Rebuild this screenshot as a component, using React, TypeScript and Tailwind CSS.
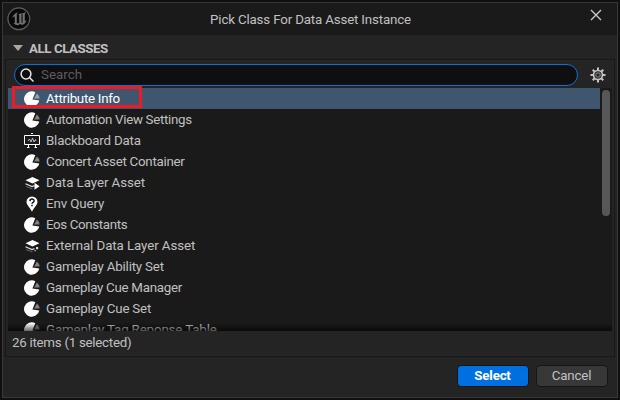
import React from "react";

type Kind = "pie" | "board" | "layers" | "external" | "query";

const items: { name: string; kind: Kind; tracking: string }[] = [
  { name: "Attribute Info", kind: "pie", tracking: "tracking-[-0.28px]" },
  { name: "Automation View Settings", kind: "pie", tracking: "tracking-[-0.32px]" },
  { name: "Blackboard Data", kind: "board", tracking: "tracking-[-0.2px]" },
  { name: "Concert Asset Container", kind: "pie", tracking: "tracking-[-0.27px]" },
  { name: "Data Layer Asset", kind: "layers", tracking: "tracking-[-0.07px]" },
  { name: "Env Query", kind: "query", tracking: "tracking-[-0.1px]" },
  { name: "Eos Constants", kind: "pie", tracking: "tracking-[-0.36px]" },
  { name: "External Data Layer Asset", kind: "external", tracking: "tracking-[-0.09px]" },
  { name: "Gameplay Ability Set", kind: "pie", tracking: "tracking-[-0.2px]" },
  { name: "Gameplay Cue Manager", kind: "pie", tracking: "tracking-[-0.28px]" },
  { name: "Gameplay Cue Set", kind: "pie", tracking: "tracking-[-0.2px]" },
  { name: "Gameplay Tag Reponse Table", kind: "pie", tracking: "tracking-[-0.15px]" },
];

function ClassIcon({ kind }: { kind: Kind }) {
  return (
    <svg className="size-4 shrink-0" viewBox="0 0 16 16" fill="none">
      {kind === "pie" && (
        <>
          <path d="M11.3 1.2A7.7 7.7 0 1 0 15.3 9.5L8.4 8.5Z" fill="#fff" />
          <path d="M12.9 2.6A7.5 7.5 0 0 1 15.6 7.4L10.1 7.6Z" fill="#fff" fillOpacity=".45" />
        </>
      )}
      {kind === "board" && (
        <>
          <path d="M.5 2.5h15v9H.5zM7 .5h2M4.5 12v2.5M11.5 12v2.5M3 14.5h2.5M10.5 14.5H13" stroke="#fff" />
          <path d="M4 8l1.5-2L7 9l1.5-4L10 9l1.5-2.5L12 8" stroke="#ccc" strokeWidth=".9" />
        </>
      )}
      {(kind === "layers" || kind === "external") && (
        <>
          <path d="M8.5 2l7 3.3-7 3.3-7-3.3Z" fill="#fff" />
          <path d="M1.5 8.7l6.5 2.8 2.5-.9" stroke="#ddd" strokeWidth="1.2" />
          <path d="M2 11.5l6.5 2.5" stroke="#666" />
          {kind === "layers" ? (
            <path d="M10.5 7.8l5 3.5-5 3.5Z" fill="#fff" />
          ) : (
            <path d="M12 9h2.2v2.2H12zM10.5 12h1.2v1.2h-1.2z" fill="#ddd" />
          )}
        </>
      )}
      {kind === "query" && (
        <>
          <path d="M8 .5A5.5 5.5 0 0 0 2.5 6C2.5 9 5.5 10.5 8 15.8 10.5 10.5 13.5 9 13.5 6A5.5 5.5 0 0 0 8 .5Z" fill="#fff" />
          <path d="M5.9 5.1C6 2.3 10.2 2.6 10.1 4.9 10 6.4 8 6.2 8 7.8M8 8.8v1.4" stroke="#171717" strokeWidth="1.5" />
        </>
      )}
    </svg>
  );
}

function EngineLogo() {
  return (
    <svg className="size-6" viewBox="0 0 24 24">
      <circle cx="11.8" cy="11.8" r="10.9" fill="#090909" stroke="#5c5c5c" strokeWidth="1.2" />
      <path d="M5 11.2C6 8 8.5 6 11 5.3 9.9 6.2 9.8 7 9.8 8v7.2c0 .9 1 1.4 2.4.8V8.7c0-.9-.4-1.2-1-1.4 1-.7 2.4-.8 3.9-1.1-.5.6-.6 1-.6 1.7v7c0 .8.5 1 1.1.6V8c0-.7-.3-1-.8-1.2 1.6-.5 2.8-.8 4.1-2.2-.8 1.8-1.1 2.8-1.1 4.1v5.4c.7-.1 1.4-.7 2-1.4-.9 3-2.9 4.9-5.1 5.4l-1.4-1.3-1.6 1.3c-2.1.2-3.9-.6-5.1-2.2.8.2 1.2-.1 1.2-1V9.5c-.8-.2-2 .6-2.8 1.7Z" fill="#707070" />
    </svg>
  );
}

function Gear() {
  return (
    <svg className="size-4" viewBox="0 0 16 16" fill="none">
      <g stroke="#c4c4c4" strokeWidth="2">
        <path d="M8 .5v3M8 12.5v3M.5 8h3M12.5 8h3M2.7 2.7l2.1 2.1M11.2 11.2l2.1 2.1M13.3 2.7l-2.1 2.1M4.8 11.2l-2.1 2.1" />
        <circle cx="8" cy="8" r="4.5" strokeWidth="1.7" />
      </g>
      <circle cx="8" cy="8" r="2.2" stroke="#777" strokeWidth="1.2" />
    </svg>
  );
}

export default function App() {
  return (
    <div className="h-[400px] w-[620px] overflow-hidden bg-[#101010] px-[2px] py-[2px] font-[Roboto,sans-serif] text-[13.33px] text-[#c0c0c0]">
      <div className="flex h-[396px] w-[616px] flex-col border border-[#383838] bg-[#242424]">
        <header className="grid h-8 shrink-0 grid-cols-[40px_1fr_40px] bg-[#1a1a1a]">
          <div className="pt-1 pl-1"><EngineLogo /></div>
          <h1 className="pt-[7px] pl-px text-center leading-5"><span className="tracking-[-0.17px]">Pick Class For Data Asset Instance</span></h1>
          <svg className="mt-[6px] ml-[13px] size-3" viewBox="0 0 12 12" stroke="#c8c8c8" strokeWidth="1.4"><path d="M1 1l10 10M11 1L1 11" /></svg>
        </header>
        <div className="flex h-6 shrink-0 items-center gap-[6px] pt-[2px] pl-[10px] font-bold">
          <svg className="h-[6px] w-[10px]" viewBox="0 0 10 6"><path d="M0 0h10L5 6Z" fill="#a8a8a8" /></svg>
          <span className="leading-[19px] tracking-[-0.45px]">ALL CLASSES</span>
        </div>
        <main className="mx-[2px] flex h-[298px] shrink-0 flex-col border border-[#181818]">
          <div className="flex h-7 shrink-0 items-start pt-1 pl-2">
            <div className="flex h-[22px] w-[564px] items-center gap-[7px] rounded-full border border-[#0870d8] bg-[#0f0f0f] pl-[5px] text-[#5d5d5d]">
              <svg className="size-[14px]" viewBox="0 0 14 14" fill="none" stroke="#e5e5e5" strokeWidth="1.5"><circle cx="6" cy="6" r="4.9" /><path d="M9.5 9.5l4 4" /></svg>
              <span className="tracking-[0.02px]">Search</span>
            </div>
            <div className="mt-[3px] ml-3"><Gear /></div>
          </div>
          <div className="relative mr-[2px] ml-[2px] flex h-[243px] shrink-0 overflow-hidden bg-[#1a1a1a]">
            <ul className="w-[592px]">
              {items.map((item, index) => (
                <li key={item.name} className={`flex h-[21px] items-center gap-[6px] pl-4 ${index === 0 ? "bg-[#40566f] text-white" : ""}`}>
                  <ClassIcon kind={item.kind} />
                  <span className={`whitespace-nowrap ${item.tracking}`}>{item.name}</span>
                </li>
              ))}
            </ul>
            <div className="mt-[2px] ml-[2px] h-[126px] w-2 rounded-full bg-[#575757]" />
            <div className="absolute inset-x-0 bottom-0 h-2 bg-linear-to-t from-black/60 to-transparent" />
          </div>
          <footer className="pt-[2px] pl-[6px] leading-5 tracking-[-0.27px]">26 items (1 selected)</footer>
        </main>
        <div className="flex justify-end gap-[7px] pt-[8px] pr-[9px]">
          <button className="h-[22px] w-[72px] rounded-[4px] border border-[#151515] bg-[#0070e0] pr-px leading-5 font-bold tracking-[-0.2px] text-white">Select</button>
          <button className="h-[22px] w-[72px] rounded-[4px] border border-[#151515] bg-[#383838] pr-px leading-5 tracking-[-0.2px]">Cancel</button>
        </div>
      </div>
      <div className="absolute top-[86px] left-[12px] h-[22px] w-[130px] border-[3px] border-[#ed1c24]" />
    </div>
  );
}
